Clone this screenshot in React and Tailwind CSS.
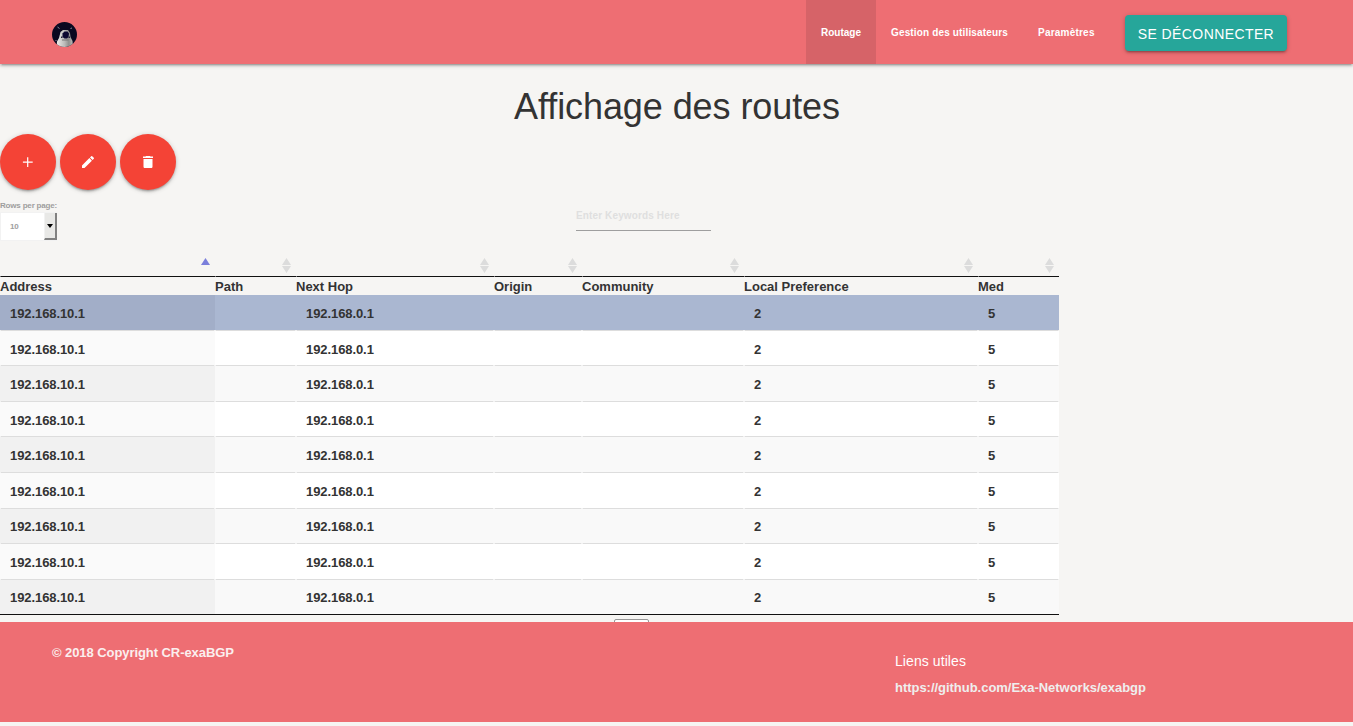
import React from "react";

const COLUMNS = ["Address", "Path", "Next Hop", "Origin", "Community", "Local Preference", "Med"];
const GRID = "grid w-[1059px] grid-cols-[215px_81px_198px_88px_162px_234px_81px]";
const ROW_HEIGHTS = ["h-9", "h-[35px]", "h-9", "h-[35px]", "h-9", "h-9", "h-[35px]", "h-9", "h-[35px]"];
const LEADING = ["leading-[37px]", "leading-[37px]", "leading-[37px]", "leading-[37px]", "leading-[37px]", "leading-[37px]", "leading-[36px]", "leading-[37px]", "leading-[36px]"];
const VALUES = ["192.168.10.1", "", "192.168.0.1", "", "", "2", "5"];

function Avatar() {
  return (
    <svg width="26" height="26" viewBox="0 0 26 26">
      <defs>
        <clipPath id="round"><circle cx="12.5" cy="12.5" r="12.5" /></clipPath>
        <linearGradient id="body" x1="0" x2="1">
          <stop offset="0" stopColor="#eeeeec" />
          <stop offset=".5" stopColor="#b9b9b7" />
          <stop offset=".75" stopColor="#8e8e8c" />
          <stop offset="1" stopColor="#c0c0be" />
        </linearGradient>
      </defs>
      <g clipPath="url(#round)">
        <rect width="26" height="26" fill="#0b0820" />
        <path d="M4.500 26 5 19.500 7 16 8.500 10 11 8h5l2 3 .5 4 2 4 .5 7Z" fill="url(#body)" />
        <path d="m10.500 11.500 2-2h3l1.500 2-.5 3.500-1.500 1.500h-2.500L10.500 15Z" fill="#0c0932" />
        <path d="M9 14.500h1.500V16H9zM16.500 14.500H18V16h-1.500z" fill="#252239" />
        <path d="m5.500 5 2 1.500M18.500 6.500l1.500-.5M3.500 18l1 1" stroke="#8a8a9b" />
        <path d="M10 18h6.500" stroke="#777776" />
      </g>
    </svg>
  );
}

function RoundButton({ label, children }) {
  return (
    <button
      aria-label={label}
      className="flex size-14 items-center justify-center rounded-full bg-[#f44336] shadow-[0_2px_2px_0_rgba(0,0,0,0.14),0_3px_1px_-2px_rgba(0,0,0,0.12),0_1px_5px_0_rgba(0,0,0,0.2)]"
    >
      <svg width="16" height="16" viewBox="0 0 16 16" fill="white">{children}</svg>
    </button>
  );
}

function SortArrows({ active }) {
  return (
    <svg width="9" height="15" viewBox="0 0 9 15" className="shrink-0">
      {active ? (
        <path d="M4.500 0 9 7H0Z" fill="#7b7fdb" />
      ) : (
        <path d="M4.500 0 9 7H0ZM0 8h9L4.500 15Z" fill="#dcdcdc" />
      )}
    </svg>
  );
}

function Row({ index }) {
  const selected = index === 0;
  const odd = index % 2 === 0;
  const first = selected ? "bg-[#a2aec8]" : odd ? "bg-[#f1f1f1]" : "bg-[#fafafa]";
  const rest = selected ? "bg-[#aab7d1]" : odd ? "bg-[#f9f9f9]" : "bg-white";
  const last = index === 8;
  return (
    <div className={`${GRID} ${ROW_HEIGHTS[index]}`}>
      {VALUES.map((value, i) => (
        <div key={i} className={`flex min-h-0 flex-col ${i === 0 ? first : rest}`}>
          <span className={`min-h-0 flex-1 pl-[10px] tracking-[-0.08px] ${LEADING[index]}`}>{value}</span>
          <span className={last ? "h-px shrink-0 bg-[#111111]" : "h-px shrink-0 border-x border-[#f1f1f1] bg-[#dddddd]"} />
        </div>
      ))}
    </div>
  );
}

export default function App() {
  return (
    <div className="flex h-[726px] flex-col overflow-hidden bg-[#f6f5f3] font-['Liberation_Sans',Arial,sans-serif] text-[13px] font-bold text-[#333333]">
      <nav className="z-10 flex h-16 shrink-0 bg-[#ee6e73] pl-[52px] text-[10px] text-white shadow-[0_2px_2px_0_rgba(0,0,0,0.14),0_3px_1px_-2px_rgba(0,0,0,0.12),0_1px_5px_0_rgba(0,0,0,0.2)]">
        <div className="pt-[22px]"><Avatar /></div>
        <div className="mr-[66px] ml-auto flex leading-[65px]">
          <a className="w-[70px] bg-[#d66368] pl-[15px]">Routage</a>
          <a className="w-[147px] pl-[15px] tracking-[0.15px]">Gestion des utilisateurs</a>
          <a className="w-[87px] pl-[15px] tracking-[0.22px]">Paramètres</a>
          <button className="mt-[15px] ml-[15px] h-9 w-[162px] rounded-[4px] bg-[#26a69a] text-[14px] leading-[38px] font-normal tracking-[0.4px] whitespace-nowrap shadow-[0_2px_2px_0_rgba(0,0,0,0.14),0_3px_1px_-2px_rgba(0,0,0,0.12),0_1px_5px_0_rgba(0,0,0,0.2)]">
            SE DÉCONNECTER
          </button>
        </div>
      </nav>

      <main className="h-[558px] shrink-0 overflow-hidden">
        <h1 className="h-[70px] pt-[23px] pl-px text-center text-[36px] leading-10 font-normal tracking-[-0.08px]">Affichage des routes</h1>
        <div className="flex h-[66px] gap-1">
          <RoundButton label="Ajouter"><path d="M7.100 3.300h1.200v4.300h4.400v1.200H8.300v4.300H7.100V8.800H2.900V7.600h4.200Z" /></RoundButton>
          <RoundButton label="Modifier"><path d="M2 11.500V14h2.500l7.400-7.300-2.500-2.600L2 11.500ZM13.800 4.800a.7.700 0 0 0 0-1l-1.600-1.600a.7.700 0 0 0-1 0L10 3.400 12.600 6l1.200-1.200Z" /></RoundButton>
          <RoundButton label="Supprimer"><path d="M3.500 12.500c0 1 .5 1.500 1.500 1.500h6c1 0 1.500-.5 1.500-1.500V5h-9v7.500ZM13 2.500h-2.500L10 2H6l-.5.500H3V4h10V2.500Z" /></RoundButton>
        </div>

        <div className="flex h-[51px]">
          <div className="w-[576px] text-[8px] text-[#9e9e9e]">
            <div className="h-[11px] leading-[11px] tracking-[-0.18px]">Rows per page:</div>
            <div className="mt-px flex h-[29px] w-[57px] border border-[#f2f2f2] bg-[#f2f2f2]">
              <span className="flex-1 bg-white pl-[9px] leading-[28px] tracking-[-0.3px]">10</span>
              <span className="-mr-px flex w-[13px] items-center justify-center border-r-2 border-b-2 border-l border-[#808080] border-l-[#f2f2f2] bg-[#e8e8e6]">
                <svg width="6" height="4" viewBox="0 0 6 4"><path d="M0 0h6L3 4Z" fill="black" /></svg>
              </span>
            </div>
          </div>
          <div className="h-[31px] w-[135px] border-b border-[#9e9e9e] text-[10px] leading-[31px] tracking-[0.13px] text-[#dfdfdf]">Enter Keywords Here</div>
        </div>

        <div className={`${GRID} h-[26px]`}>
          {COLUMNS.map((name, i) => (
            <div key={name} className="flex flex-col">
              <div className="flex h-[25px] items-start justify-end pt-[7px] pr-[5px]"><SortArrows active={i === 0} /></div>
              <div className="h-px border-l border-[#777777] bg-[#111111]" />
            </div>
          ))}
        </div>
        <div className={`${GRID} h-[18px] leading-[19px]`}>
          {COLUMNS.map((name) => <span key={name}>{name}</span>)}
        </div>
        {ROW_HEIGHTS.map((_, i) => <Row key={i} index={i} />)}
        <div className="mt-1 ml-[614px] h-8 w-[35px] rounded-[2px] border border-[#979797] bg-white" />
      </main>

      <footer className="flex h-[100px] shrink-0 bg-[#ee6e73] text-white">
        <div className="w-[895px] pt-[22px] pl-[52px] leading-[17px] tracking-[-0.07px] text-[#fbeeee]">© 2018 Copyright CR-exaBGP</div>
        <div className="pt-[29px]">
          <div className="text-[14px] leading-5 font-normal tracking-[0.08px]">Liens utiles</div>
          <a className="mt-[7px] block leading-5 tracking-[-0.03px] text-[#eeeeee]">https://github.com/Exa-Networks/exabgp</a>
        </div>
      </footer>
    </div>
  );
}
